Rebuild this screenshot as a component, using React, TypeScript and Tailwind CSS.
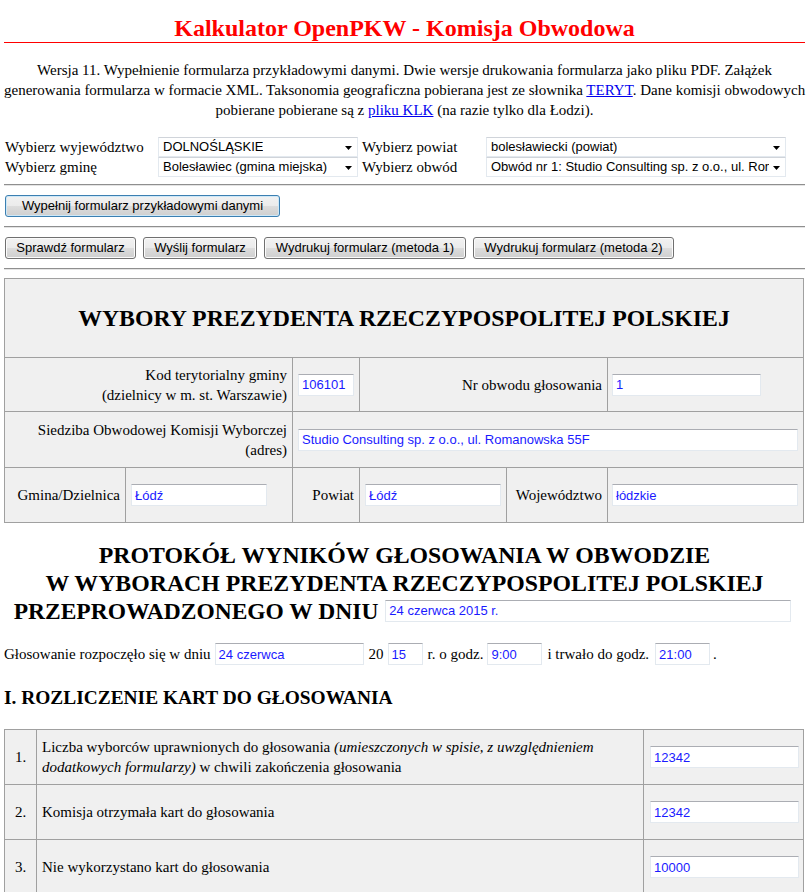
import React from "react";

function Field({ w, value }: { w: string; value: string }) {
  return (
    <input
      readOnly
      value={value}
      className={`${w} h-[22px] border border-[#e3e9ef] border-t-[#abadb3] bg-white px-[3px] text-[13px] font-normal text-[#1a1aff] outline-none font-['Liberation_Sans',Arial,sans-serif]`}
    />
  );
}

function Sel({ w, value }: { w: string; value: string }) {
  return (
    <div
      className={`${w} relative flex h-[20px] items-center overflow-hidden whitespace-nowrap border border-[#e3e9ef] border-t-[#d0d4da] bg-white pl-[4px] pr-[16px] text-[13px] text-black font-['Liberation_Sans',Arial,sans-serif]`}
    >
      <span className="overflow-hidden">{value}</span>
      <svg className="absolute right-[5px] top-[8px]" width="7" height="4" viewBox="0 0 7 4">
        <path d="M0 0H7L3.5 4Z" fill="#000" />
      </svg>
    </div>
  );
}

function Btn({ w, children, focus }: { w: string; children: React.ReactNode; focus?: boolean }) {
  return (
    <button
      className={`${w} h-[22px] rounded-[3px] border ${
        focus ? "border-[#3c7fb1] shadow-[inset_0_0_0_1px_#cde8f8]" : "border-[#707070] shadow-[inset_0_0_0_1px_#fbfbfb]"
      } bg-[linear-gradient(to_bottom,#f2f2f2_0%,#ebebeb_50%,#dddddd_50%,#cfcfcf_100%)] text-[13px] leading-[20px] text-black font-['Liberation_Sans',Arial,sans-serif]`}
    >
      {children}
    </button>
  );
}

function Hr({ mt }: { mt: string }) {
  return <div className={`${mt} h-[2px] border-t border-b border-t-[#8f8f8f] border-b-[#e4e4e4]`} />;
}

export default function App() {
  return (
    <div className="min-h-[892px] bg-white text-black font-['Liberation_Serif','Times_New_Roman',serif]">
      <div className="ml-[4px] w-[801px]">
        <h1 className="border-b border-[#ff0000] pt-[14px] text-center text-[24px] font-bold leading-[28px] text-[#ff0000]">
          Kalkulator OpenPKW - Komisja Obwodowa
        </h1>

        <p className="mt-[17px] text-center text-[15px] leading-[20px] whitespace-nowrap">
          Wersja 11. Wypełnienie formularza przykładowymi danymi. Dwie wersje drukowania formularza jako pliku PDF. Załążek
          <br />
          generowania formularza w formacie XML. Taksonomia geograficzna pobierana jest ze słownika{" "}
          <a href="#" className="text-[#0000ee] underline">
            TERYT
          </a>
          . Dane komisji obwodowych
          <br />
          pobierane pobierane są z{" "}
          <a href="#" className="text-[#0000ee] underline">
            pliku KLK
          </a>{" "}
          (na razie tylko dla Łodzi).
        </p>

        <div className="ml-[1px] mt-[17px] grid grid-cols-[153px_200px_128px_300px] grid-rows-[20px_20px] text-[15px] leading-[20px]">
          <div className="flex items-center">Wybierz wyjewództwo</div>
          <Sel w="w-[200px]" value="DOLNOŚLĄSKIE" />
          <div className="flex items-center pl-[4px]">Wybierz powiat</div>
          <Sel w="w-[300px]" value="bolesławiecki (powiat)" />
          <div className="flex items-center">Wybierz gminę</div>
          <Sel w="w-[200px]" value="Bolesławiec (gmina miejska)" />
          <div className="flex items-center pl-[4px]">Wybierz obwód</div>
          <Sel w="w-[300px]" value="Obwód nr 1: Studio Consulting sp. z o.o., ul. Romanowska 55F" />
        </div>

        <Hr mt="mt-[7px]" />

        <div className="mt-[9px] flex pl-[1px]">
          <Btn w="w-[275px]" focus>
            Wypełnij formularz przykładowymi danymi
          </Btn>
        </div>

        <Hr mt="mt-[9px]" />

        <div className="mt-[9px] flex gap-[7px] pl-[1px]">
          <Btn w="w-[131px]">Sprawdź formularz</Btn>
          <Btn w="w-[114px]">Wyślij formularz</Btn>
          <Btn w="w-[202px]">Wydrukuj formularz (metoda 1)</Btn>
          <Btn w="w-[201px]">Wydrukuj formularz (metoda 2)</Btn>
        </div>

        <Hr mt="mt-[9px]" />

        <div className="mt-[8px] grid w-[800px] grid-cols-[120px_166px_66px_146px_100px_195px] grid-rows-[78px_53px_55px_54px] gap-px bg-[#a0a0a0] p-px text-[15px] leading-[20px]">
          <div className="col-span-6 flex items-center justify-center bg-[#f0f0f0]">
            <h2 className="text-[23.8px] font-bold">WYBORY PREZYDENTA RZECZYPOSPOLITEJ POLSKIEJ</h2>
          </div>

          <div className="col-span-2 flex flex-col items-end justify-center bg-[#f0f0f0] pr-[5px] text-right">
            <span>Kod terytorialny gminy</span>
            <span>(dzielnicy w m. st. Warszawie)</span>
          </div>
          <div className="flex items-center bg-[#f0f0f0] pl-[5px]">
            <Field w="w-[56px]" value="106101" />
          </div>
          <div className="col-span-2 flex items-center justify-end bg-[#f0f0f0] pr-[5px]">Nr obwodu głosowania</div>
          <div className="flex items-center bg-[#f0f0f0] pl-[4px]">
            <Field w="w-[149px]" value="1" />
          </div>

          <div className="col-span-2 flex flex-col items-end justify-center bg-[#f0f0f0] pr-[5px] text-right">
            <span>Siedziba Obwodowej Komisji Wyborczej</span>
            <span>(adres)</span>
          </div>
          <div className="col-span-4 flex items-center bg-[#f0f0f0] pl-[5px]">
            <Field w="w-[500px]" value="Studio Consulting sp. z o.o., ul. Romanowska 55F" />
          </div>

          <div className="flex items-center justify-end bg-[#f0f0f0] pr-[5px]">Gmina/Dzielnica</div>
          <div className="flex items-center bg-[#f0f0f0] pl-[5px]">
            <Field w="w-[136px]" value="Łódź" />
          </div>
          <div className="flex items-center justify-end bg-[#f0f0f0] pr-[5px]">Powiat</div>
          <div className="flex items-center bg-[#f0f0f0] pl-[5px]">
            <Field w="w-[136px]" value="Łódź" />
          </div>
          <div className="flex items-center justify-end bg-[#f0f0f0] pr-[5px]">Województwo</div>
          <div className="flex items-center bg-[#f0f0f0] pl-[4px]">
            <Field w="w-[186px]" value="łódzkie" />
          </div>
        </div>

        <h2 className="mt-[18px] text-center text-[23.8px] font-bold leading-[28px]">
          <div>PROTOKÓŁ WYNIKÓW GŁOSOWANIA W OBWODZIE</div>
          <div>W WYBORACH PREZYDENTA RZECZYPOSPOLITEJ POLSKIEJ</div>
          <div className="flex items-center justify-center gap-[7px] pr-[4px]">
            <span className="text-[23.5px]">PRZEPROWADZONEGO W DNIU</span>
            <Field w="w-[406px]" value="24 czerwca 2015 r." />
          </div>
        </h2>

        <div className="mt-[18px] flex h-[22px] items-center whitespace-nowrap text-[15px]">
          <span>Głosowanie rozpoczęło się w dniu</span>
          <span className="ml-[4px] flex">
            <Field w="w-[149px]" value="24 czerwca" />
          </span>
          <span className="ml-[5px]">20</span>
          <span className="ml-[4px] flex">
            <Field w="w-[35px]" value="15" />
          </span>
          <span className="ml-[5px]">r. o godz.</span>
          <span className="ml-[4px] flex">
            <Field w="w-[55px]" value="9:00" />
          </span>
          <span className="ml-[5px]">i trwało do godz.</span>
          <span className="ml-[6px] flex">
            <Field w="w-[55px]" value="21:00" />
          </span>
          <span className="ml-[3px]">.</span>
        </div>

        <h3 className="mt-[21px] text-[19.4px] font-bold leading-[24px]">I. ROZLICZENIE KART DO GŁOSOWANIA</h3>

        <div className="mt-[19px] grid w-[800px] grid-cols-[31px_606px_159px] grid-rows-[54px_54px_54px] gap-px bg-[#a0a0a0] p-px text-[15px] leading-[20px]">
          <div className="flex items-center justify-center bg-[#f0f0f0]">1.</div>
          <div className="flex items-center bg-[#f0f0f0] pl-[5px]">
            <div>
              Liczba wyborców uprawnionych do głosowania <i>(umieszczonych w spisie, z uwzględnieniem</i>
              <br />
              <i>dodatkowych formularzy)</i> w chwili zakończenia głosowania
            </div>
          </div>
          <div className="flex items-center bg-[#f0f0f0] pl-[6px]">
            <Field w="w-[149px]" value="12342" />
          </div>

          <div className="flex items-center justify-center bg-[#f0f0f0]">2.</div>
          <div className="flex items-center bg-[#f0f0f0] pl-[5px]">Komisja otrzymała kart do głosowania</div>
          <div className="flex items-center bg-[#f0f0f0] pl-[6px]">
            <Field w="w-[149px]" value="12342" />
          </div>

          <div className="flex items-center justify-center bg-[#f0f0f0]">3.</div>
          <div className="flex items-center bg-[#f0f0f0] pl-[5px]">Nie wykorzystano kart do głosowania</div>
          <div className="flex items-center bg-[#f0f0f0] pl-[6px]">
            <Field w="w-[149px]" value="10000" />
          </div>
        </div>
      </div>
    </div>
  );
}
